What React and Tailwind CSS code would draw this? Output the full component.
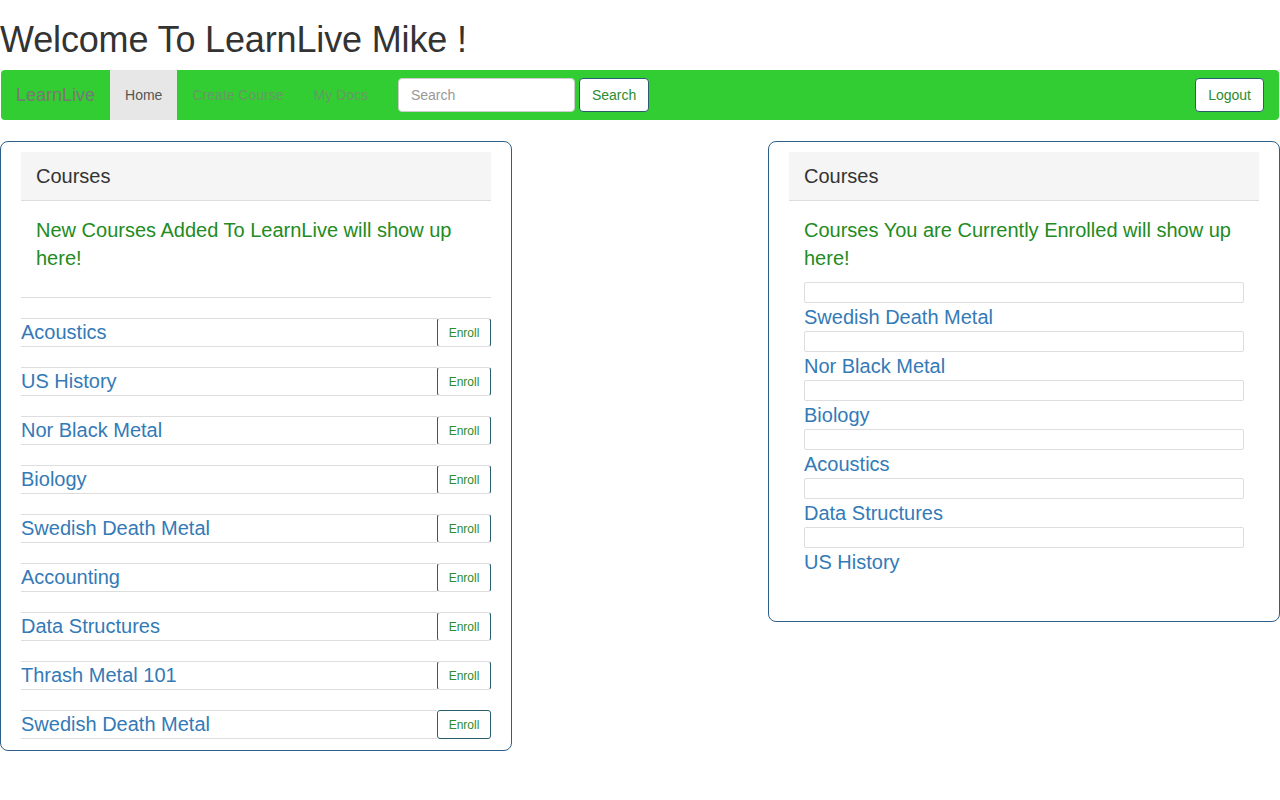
const newCourses = [
  'Acoustics',
  'US History',
  'Nor Black Metal',
  'Biology',
  'Swedish Death Metal',
  'Accounting',
  'Data Structures',
  'Thrash Metal 101',
  'Swedish Death Metal',
]

const enrolled = [
  'Swedish Death Metal',
  'Nor Black Metal',
  'Biology',
  'Acoustics',
  'Data Structures',
  'US History',
]

function PanelHeading() {
  return (
    <div className="h-[49px] flex items-center px-[15px] pt-[1px] bg-[#f5f5f5] border-b border-[#ddd] text-[20px] text-[#333]">
      Courses
    </div>
  )
}

export default function App() {
  return (
    <div className="min-h-[800px] bg-white text-[#333] text-[14px]" style={{ fontFamily: '"Liberation Sans", Arial, sans-serif' }}>
      <h1 className="text-[36px] leading-[1.1] font-normal mt-[20px] mb-[10px] tracking-[-0.15px]">Welcome To LearnLive Mike !</h1>

      <nav className="mx-[1px] h-[50px] bg-[#32cd32] rounded-[4px] flex items-center">
        <a className="h-full flex items-center px-[15px] pt-[1px] text-[18px] text-[#777]">LearnLive</a>
        <a className="h-full flex items-center px-[15px] pt-[1px] bg-[#e7e7e7] text-[#555]">Home</a>
        <a className="h-full flex items-center px-[15px] pt-[1px] text-[#669966]">Create Course</a>
        <a className="h-full flex items-center px-[15px] pt-[1px] text-[#669966]">My Docs</a>
        <div className="flex items-center gap-[4px] px-[15px]">
          <input
            type="text"
            placeholder="Search"
            className="w-[177px] h-[34px] px-[12px] bg-white border border-[#ccc] rounded-[4px] text-[14px] placeholder-[#999] focus:outline-none"
          />
          <button type="button" className="h-[34px] px-[12px] pt-[1px] bg-white border border-[#2a5e6e] rounded-[4px] text-[#2e8b2e]">
            Search
          </button>
        </div>
        <button type="button" className="ml-auto mr-[15px] h-[34px] px-[12px] pt-[1px] bg-white border border-[#2a5e6e] rounded-[4px] text-[#2e8b2e]">
          Logout
        </button>
      </nav>

      <div className="mt-[21px] flex justify-between items-start">
        <section className="w-[512px] border border-[#2e5f8a] rounded-[8px] px-[20px] pt-[10px] pb-[11px]">
          <PanelHeading />
          <div className="px-[15px] pt-[15px] pb-[15px] border-b border-[#ddd]">
            <p className="text-[20px] leading-[28px] text-[#228b22] mb-[10px]">
              New Courses Added To LearnLive will show up here!
            </p>
          </div>
          <ul className="mt-[20px] flex flex-col gap-[20px]">
            {newCourses.map((c, i) => (
              <li key={i} className="flex h-[29px]">
                <div className="flex-1 flex items-center border-y border-[#ddd] text-[20px] text-[#337ab7]">{c}</div>
                <button
                  type="button"
                  className={
                    i === newCourses.length - 1
                      ? 'w-[54px] pt-[1px] border border-[#2a5e6e] rounded-[3px] text-[12px] text-[#2e8b2e] bg-white'
                      : 'w-[54px] pt-[1px] border-x border-y border-x-[#2a5e6e] border-y-[#ddd] rounded-[3px] text-[12px] text-[#2e8b2e] bg-white'
                  }
                >
                  Enroll
                </button>
              </li>
            ))}
          </ul>
        </section>

        <section className="w-[512px] border border-[#2e5f8a] rounded-[8px] px-[20px] pt-[10px] pb-[45px]">
          <PanelHeading />
          <div className="px-[15px] pt-[15px]">
            <p className="text-[20px] leading-[28px] text-[#228b22] mb-[10px]">
              Courses You are Currently Enrolled will show up here!
            </p>
            <ul>
              {enrolled.map((c, i) => (
                <li key={i}>
                  <div className="h-[21px] border border-[#ddd] rounded-[2px]"></div>
                  <div className="text-[20px] leading-[28px] text-[#337ab7]">{c}</div>
                </li>
              ))}
            </ul>
          </div>
        </section>
      </div>
    </div>
  )
}
